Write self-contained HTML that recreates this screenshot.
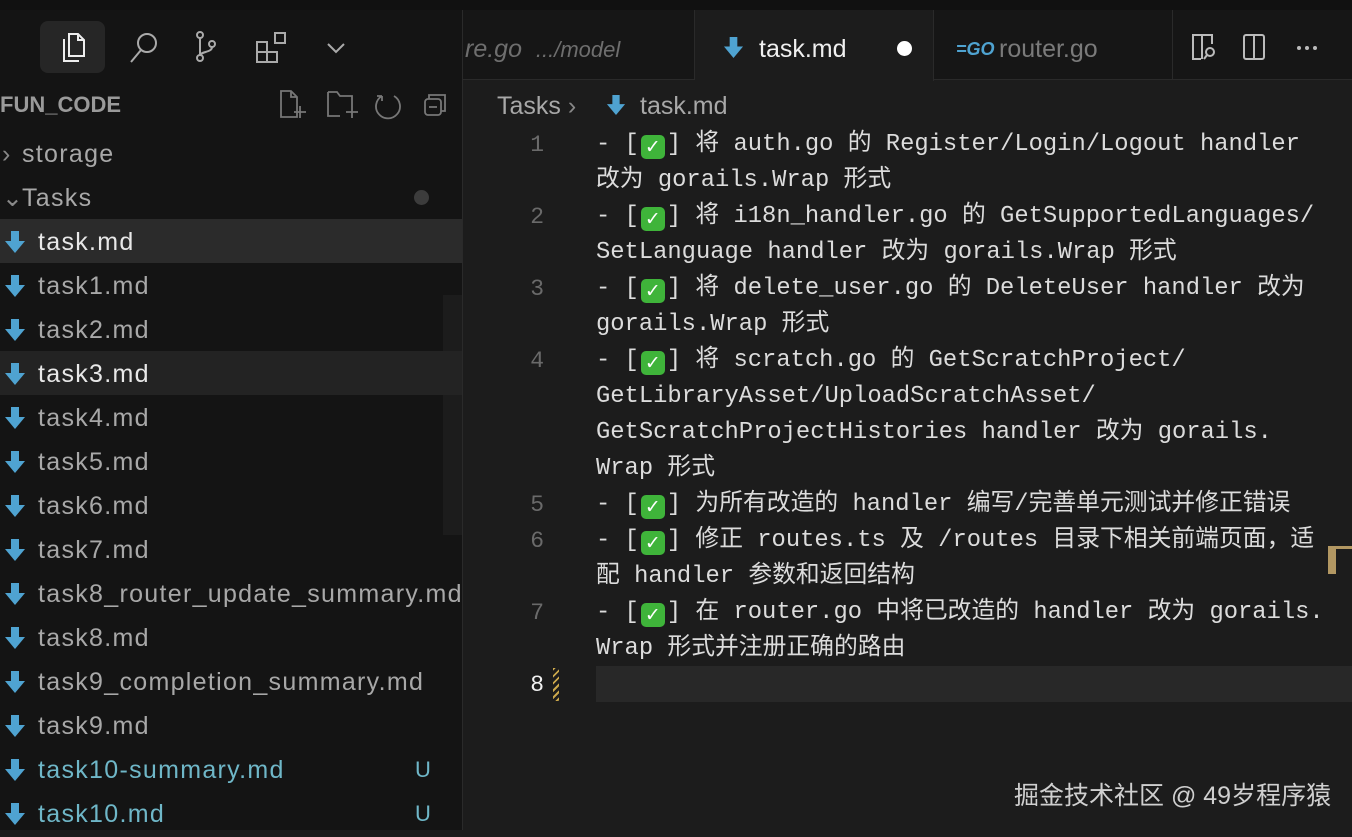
<!DOCTYPE html>
<html><head><meta charset="utf-8"><style>
*{margin:0;padding:0;box-sizing:border-box}
body{width:1352px;height:830px;overflow:hidden;background:#1c1c1c;position:relative;font-family:"Liberation Sans","Noto Sans CJK SC",sans-serif}
.abs{position:absolute}
#top{left:0;top:0;width:1352px;height:10px;background:#111}
#side{left:0;top:10px;width:463px;height:820px;background:#141414;border-right:1px solid #2a2a2a}
#tabs{left:463px;top:10px;width:889px;height:70px;background:#161616;border-bottom:1px solid #2a2a2a}
.tab{position:absolute;top:0;height:70px;border-right:1px solid #2a2a2a;font-size:25px;line-height:78px;color:#8a8a8a}
.row{position:absolute;left:0;width:462px;height:44px;font-size:25px;line-height:46px;color:#a8a8a8;letter-spacing:1.3px}
.row .ic{position:absolute;left:4px;top:12px}
.row .t{position:absolute;left:38px}
.u{color:#6fb7c8}
.U{position:absolute;left:415px;color:#6fb7c8;font-size:22px}
.code{position:absolute;left:596px;font-family:"Liberation Mono","Noto Sans CJK SC",monospace;font-size:23.8px;line-height:36px;color:#dcdcdc;white-space:pre}
.ln{position:absolute;width:60px;left:484px;text-align:right;font-family:"Liberation Mono",monospace;font-size:23px;line-height:36px;color:#6a6a6a}
.ck{display:inline-block;width:24px;height:24px;background:#3fb43a;border-radius:5px;color:#fff;font-size:19px;line-height:24px;text-align:center;vertical-align:-3px;font-family:"DejaVu Sans",sans-serif;font-weight:bold;margin:0 2px}
svg{display:block}
</style></head><body>
<div id="top" class="abs"></div>
<div id="side" class="abs"></div>
<div class="abs" style="left:40px;top:21px;width:65px;height:52px;background:#262626;border-radius:8px"></div>
<svg class="abs" style="left:60px;top:30px" width="30" height="34" viewBox="0 0 30 34" fill="none" stroke="#eee" stroke-width="2"><path d="M9 4h9l6 6v16H9z M4 9v22h15"/><path d="M18 4v6h6"/></svg>
<svg class="abs" style="left:128px;top:30px" width="32" height="34" viewBox="0 0 32 34" fill="none" stroke="#aaa" stroke-width="2"><circle cx="19" cy="13" r="9"/><path d="M13 20L3 32"/></svg>
<svg class="abs" style="left:192px;top:30px" width="28" height="34" viewBox="0 0 28 34" fill="none" stroke="#aaa" stroke-width="2"><circle cx="8" cy="5" r="3"/><circle cx="8" cy="28" r="3"/><circle cx="20" cy="14" r="3"/><path d="M8 8v17M20 17c0 6-12 4-12 9"/></svg>
<svg class="abs" style="left:255px;top:30px" width="34" height="34" viewBox="0 0 34 34" fill="none" stroke="#aaa" stroke-width="2"><rect x="2" y="12" width="10" height="10"/><rect x="2" y="22" width="10" height="10"/><rect x="12" y="22" width="10" height="10"/><rect x="20" y="3" width="10" height="10"/></svg>
<svg class="abs" style="left:326px;top:42px" width="20" height="12" viewBox="0 0 20 12" fill="none" stroke="#aaa" stroke-width="2"><path d="M2 2l8 8 8-8"/></svg>
<div class="abs" style="left:0;top:90px;font-size:22px;font-weight:bold;color:#9a9a9a;line-height:30px">FUN_CODE</div>
<svg class="abs" style="left:278px;top:88px" width="175" height="34" viewBox="0 0 175 34" fill="none" stroke="#777" stroke-width="1.8"><path d="M3 3h10l6 6v20H3z M13 3v6h6 M16 24h12 M22 18v12"/><path d="M50 4h9l3 4h12v14 M50 4v24h12 M68 24h12 M74 18v12"/><path d="M104 8a12 12 0 1 0 12 0 M104 8v5 M104 8h-5"/><rect x="147" y="11" width="16" height="16" rx="3"/><path d="M151 11V7h16v16h-4 M151 19h8"/></svg>
<div class="row" style="top:131px"><span class="abs" style="left:2px;color:#888">›</span><span class="t" style="left:22px">storage</span></div>
<div class="row" style="top:175px"><span class="abs" style="left:2px;color:#888">⌄</span><span class="t" style="left:22px">Tasks</span><span class="abs" style="left:414px;top:15px;width:15px;height:15px;border-radius:50%;background:#3c3c3c"></span></div>
<div class="abs" style="left:443px;top:295px;width:19px;height:240px;background:#1c1c1c"></div>
<div class="row" style="top:219px;background:#2b2b2b;color:#e8e8e8"><svg class="ic" width="22" height="22" viewBox="0 0 22 22"><path d="M7 0h8v10h6L11 22 1 10h6z" fill="#4fa3d1"/></svg><span class="t">task.md</span></div>
<div class="row" style="top:263px"><svg class="ic" width="22" height="22" viewBox="0 0 22 22"><path d="M7 0h8v10h6L11 22 1 10h6z" fill="#4fa3d1"/></svg><span class="t">task1.md</span></div>
<div class="row" style="top:307px"><svg class="ic" width="22" height="22" viewBox="0 0 22 22"><path d="M7 0h8v10h6L11 22 1 10h6z" fill="#4fa3d1"/></svg><span class="t">task2.md</span></div>
<div class="row" style="top:351px;background:#232323;color:#e8e8e8"><svg class="ic" width="22" height="22" viewBox="0 0 22 22"><path d="M7 0h8v10h6L11 22 1 10h6z" fill="#4fa3d1"/></svg><span class="t">task3.md</span></div>
<div class="row" style="top:395px"><svg class="ic" width="22" height="22" viewBox="0 0 22 22"><path d="M7 0h8v10h6L11 22 1 10h6z" fill="#4fa3d1"/></svg><span class="t">task4.md</span></div>
<div class="row" style="top:439px"><svg class="ic" width="22" height="22" viewBox="0 0 22 22"><path d="M7 0h8v10h6L11 22 1 10h6z" fill="#4fa3d1"/></svg><span class="t">task5.md</span></div>
<div class="row" style="top:483px"><svg class="ic" width="22" height="22" viewBox="0 0 22 22"><path d="M7 0h8v10h6L11 22 1 10h6z" fill="#4fa3d1"/></svg><span class="t">task6.md</span></div>
<div class="row" style="top:527px"><svg class="ic" width="22" height="22" viewBox="0 0 22 22"><path d="M7 0h8v10h6L11 22 1 10h6z" fill="#4fa3d1"/></svg><span class="t">task7.md</span></div>
<div class="row" style="top:571px"><svg class="ic" width="22" height="22" viewBox="0 0 22 22"><path d="M7 0h8v10h6L11 22 1 10h6z" fill="#4fa3d1"/></svg><span class="t">task8_router_update_summary.md</span></div>
<div class="row" style="top:615px"><svg class="ic" width="22" height="22" viewBox="0 0 22 22"><path d="M7 0h8v10h6L11 22 1 10h6z" fill="#4fa3d1"/></svg><span class="t">task8.md</span></div>
<div class="row" style="top:659px"><svg class="ic" width="22" height="22" viewBox="0 0 22 22"><path d="M7 0h8v10h6L11 22 1 10h6z" fill="#4fa3d1"/></svg><span class="t">task9_completion_summary.md</span></div>
<div class="row" style="top:703px"><svg class="ic" width="22" height="22" viewBox="0 0 22 22"><path d="M7 0h8v10h6L11 22 1 10h6z" fill="#4fa3d1"/></svg><span class="t">task9.md</span></div>
<div class="row" style="top:747px"><svg class="ic" width="22" height="22" viewBox="0 0 22 22"><path d="M7 0h8v10h6L11 22 1 10h6z" fill="#4fa3d1"/></svg><span class="t u">task10-summary.md</span><span class="U">U</span></div>
<div class="row" style="top:791px"><svg class="ic" width="22" height="22" viewBox="0 0 22 22"><path d="M7 0h8v10h6L11 22 1 10h6z" fill="#4fa3d1"/></svg><span class="t u">task10.md</span><span class="U">U</span></div>

<div id="tabs" class="abs"></div>
<div class="tab" style="left:463px;top:10px;width:232px;font-style:italic;color:#6e6e6e;padding-left:2px">re.go&nbsp; <span style="font-size:22px">.../model</span></div>
<div class="tab" style="left:695px;top:10px;width:239px;background:#1c1c1c;color:#f0f0f0;height:71px"><svg class="abs" style="left:28px;top:27px" width="21" height="21" viewBox="0 0 22 22"><path d="M7 0h8v10h6L11 22 1 10h6z" fill="#4fa3d1"/></svg><span class="abs" style="left:64px">task.md</span><span class="abs" style="left:202px;top:31px;width:15px;height:15px;border-radius:50%;background:#fff"></span></div>
<div class="tab" style="left:934px;top:10px;width:239px"><span class="abs" style="left:22px;font-size:18px;font-weight:bold;font-style:italic;color:#4fa3d1">=GO</span><span class="abs" style="left:65px;color:#7a7a7a">router.go</span></div>
<svg class="abs" style="left:1190px;top:32px" width="130" height="30" viewBox="0 0 130 30" fill="none" stroke="#bbb" stroke-width="2"><path d="M22 12V3H3v24h8 M12 3v24"/><circle cx="20" cy="20" r="4"/><path d="M17 23l-3 4"/><rect x="54" y="3" width="20" height="24" rx="2"/><path d="M64 3v24"/></svg>
<div class="abs" style="left:1297px;top:46px;width:4px;height:4px;border-radius:50%;background:#bbb;box-shadow:8px 0 #bbb,16px 0 #bbb"></div>

<div class="abs" style="left:497px;top:89px;font-size:25px;line-height:34px;color:#a8a8a8">Tasks <span style="color:#888">›</span></div>
<svg class="abs" style="left:606px;top:95px" width="20" height="20" viewBox="0 0 22 22"><path d="M7 0h8v10h6L11 22 1 10h6z" fill="#4fa3d1"/></svg>
<div class="abs" style="left:640px;top:89px;font-size:25px;line-height:34px;color:#a8a8a8">task.md</div>

<div class="ln" style="top:127px">1</div>
<div class="ln" style="top:199px">2</div>
<div class="ln" style="top:271px">3</div>
<div class="ln" style="top:343px">4</div>
<div class="ln" style="top:487px">5</div>
<div class="ln" style="top:523px">6</div>
<div class="ln" style="top:595px">7</div>
<div class="ln" style="top:667px;color:#f0f0f0">8</div>
<div class="abs" style="left:553px;top:668px;width:6px;height:33px;background:repeating-linear-gradient(135deg,#c9a64a 0 2px,transparent 2px 5px)"></div>
<div class="abs" style="left:596px;top:666px;width:756px;height:36px;background:#282828"></div>
<div class="abs" style="left:1328px;top:546px;width:24px;height:3px;background:#b29762"></div>
<div class="abs" style="left:1328px;top:546px;width:8px;height:28px;background:#b29762"></div>

<div class="code" style="top:127px">- [<span class="ck">✓</span>] 将 auth.go 的 Register/Login/Logout handler
改为 gorails.Wrap 形式
- [<span class="ck">✓</span>] 将 i18n_handler.go 的 GetSupportedLanguages/
SetLanguage handler 改为 gorails.Wrap 形式
- [<span class="ck">✓</span>] 将 delete_user.go 的 DeleteUser handler 改为
gorails.Wrap 形式
- [<span class="ck">✓</span>] 将 scratch.go 的 GetScratchProject/
GetLibraryAsset/UploadScratchAsset/
GetScratchProjectHistories handler 改为 gorails.
Wrap 形式
- [<span class="ck">✓</span>] 为所有改造的 handler 编写/完善单元测试并修正错误
- [<span class="ck">✓</span>] 修正 routes.ts 及 /routes 目录下相关前端页面，适
配 handler 参数和返回结构
- [<span class="ck">✓</span>] 在 router.go 中将已改造的 handler 改为 gorails.
Wrap 形式并注册正确的路由</div>

<div class="abs" style="left:1014px;top:776px;font-size:25px;color:#cfcfcf">掘金技术社区 @ 49岁程序猿</div>
</body></html>
